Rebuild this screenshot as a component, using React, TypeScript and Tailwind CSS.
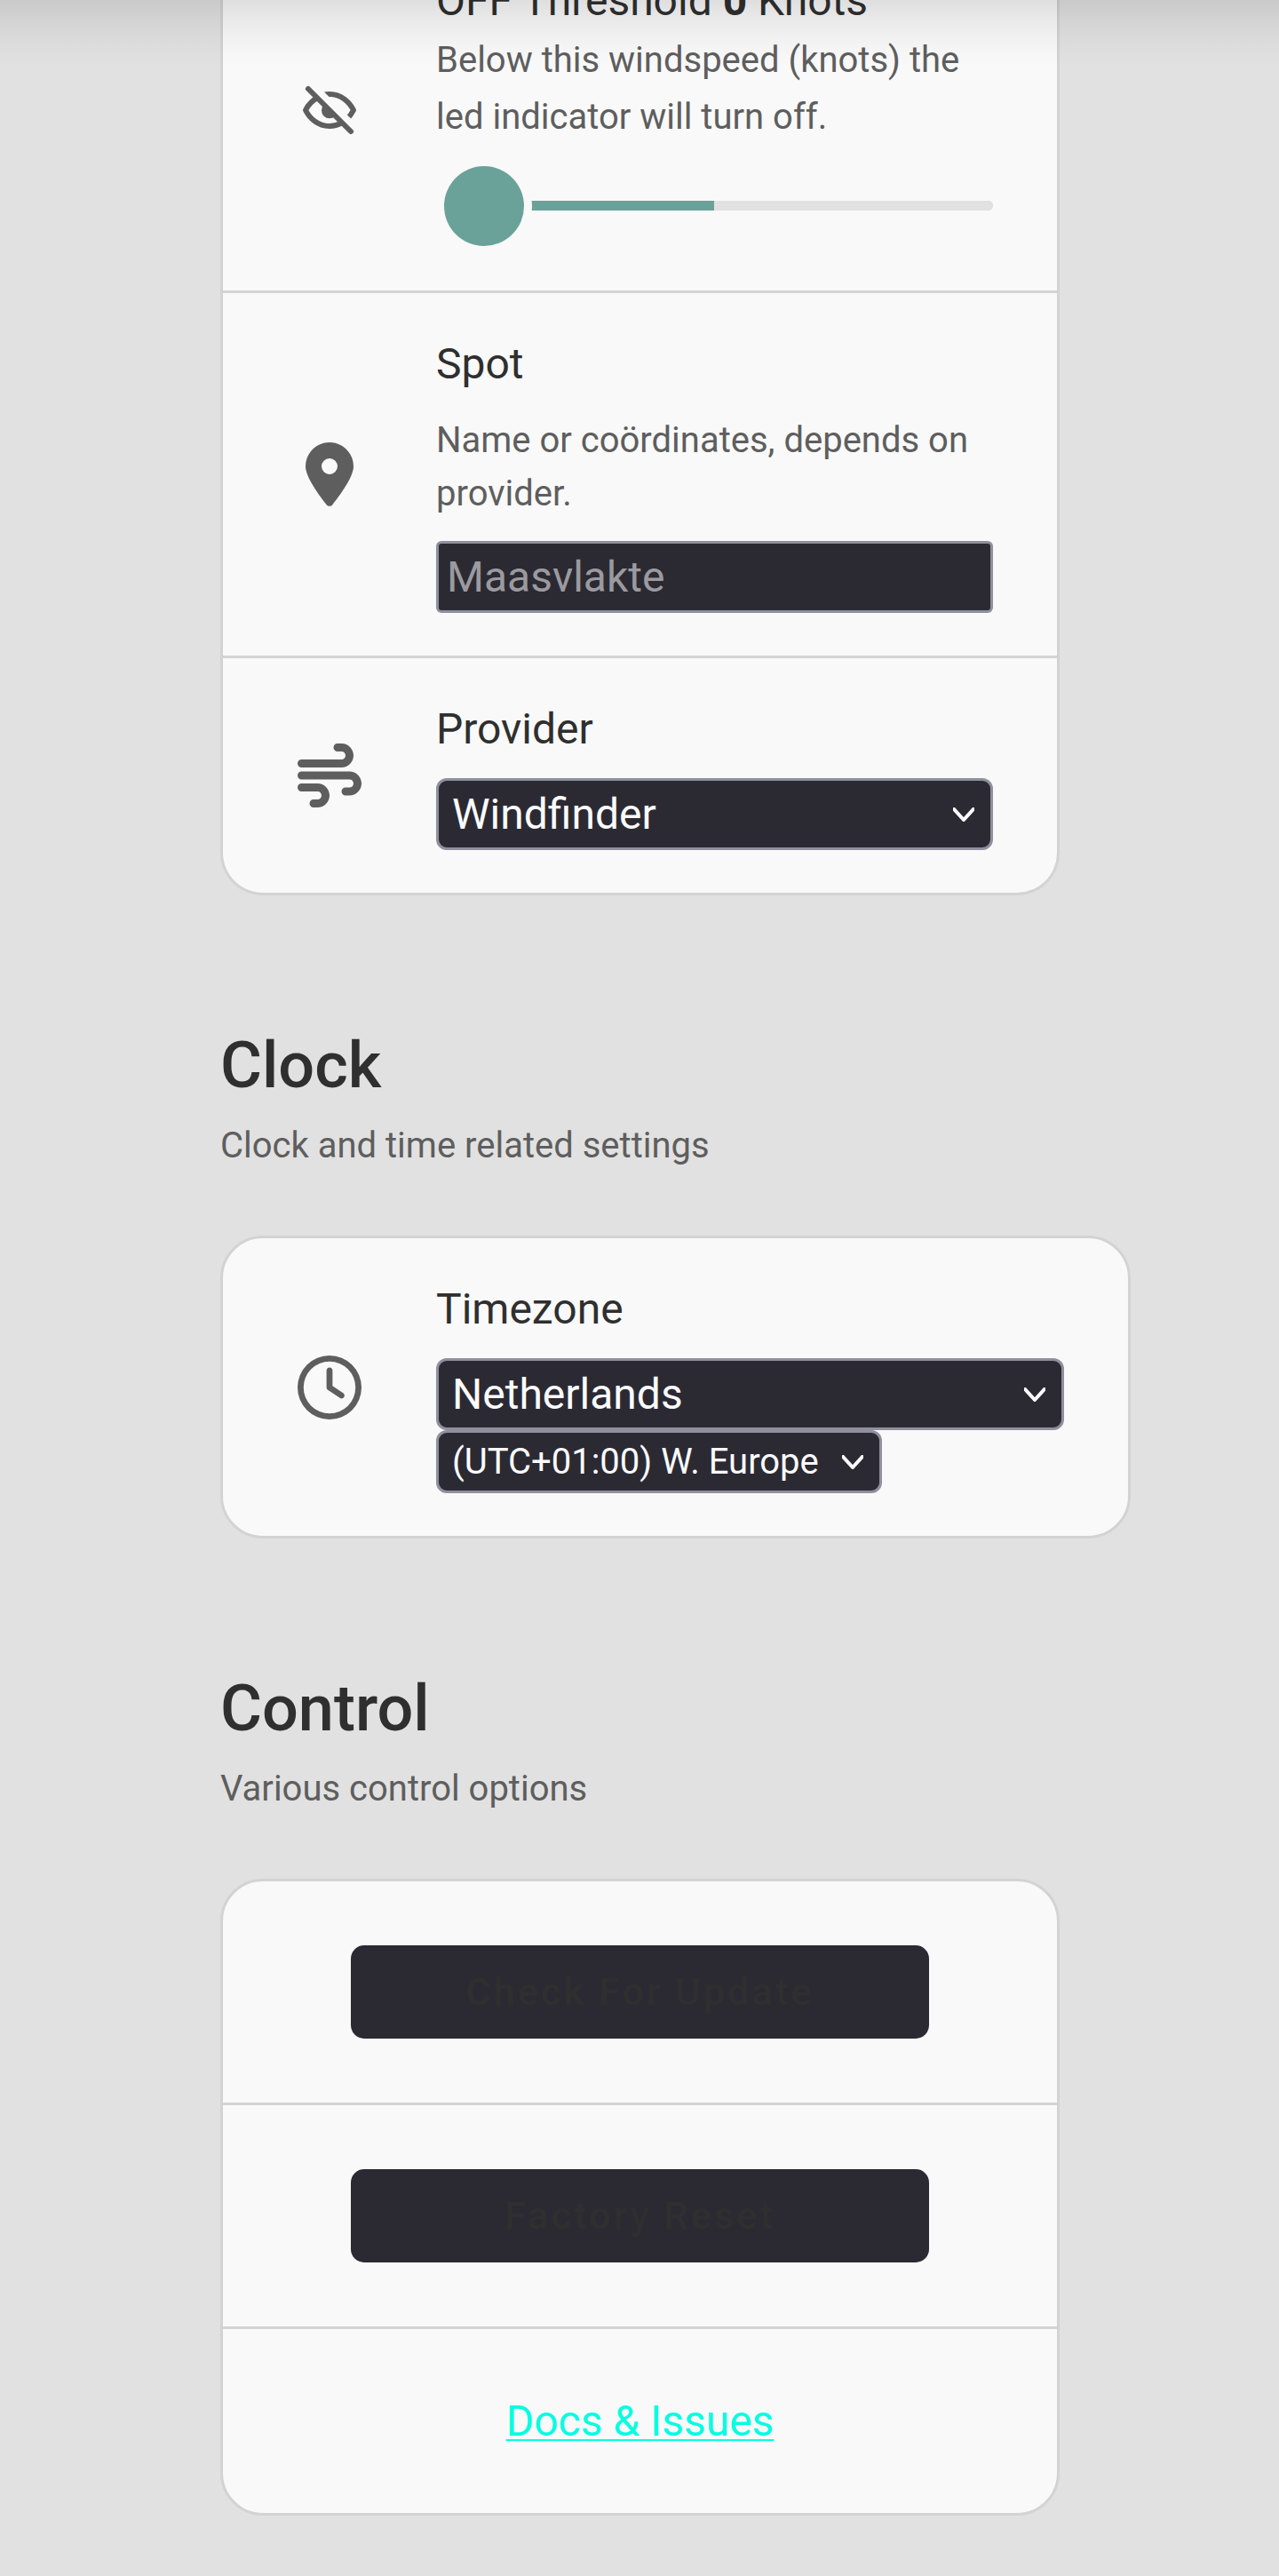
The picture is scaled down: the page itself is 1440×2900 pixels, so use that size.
import type { ReactNode } from 'react';
import { FaLocationDot, FaRegClock, FaWind } from 'react-icons/fa6';

function EyeOffIcon() {
  return (
    <svg viewBox="0 0 24 24" className="size-[72px]" fill="none" stroke="currentColor" strokeWidth="2">
      <defs>
        <clipPath id="eye-upper">
          <path d="M4.8 0H24V19.2Z" />
        </clipPath>
        <clipPath id="eye-lower">
          <path d="M0 0L24 24H0Z" />
        </clipPath>
      </defs>
      <g clipPath="url(#eye-upper)">
        <path d="M10 6.2C10.6 6.07 11.3 6 12 6C16.4 6 19.5 9 21 12C20.4 13.2 19.7 14.2 18.5 15.4" strokeLinejoin="round" />
      </g>
      <g clipPath="url(#eye-lower)">
        <path d="M8 7.1C5.6 8.3 4 10 3 12C4.5 15 7.6 18 12 18C13.8 18 15.3 17.5 16.6 16.8" strokeLinejoin="round" />
        <circle cx="12" cy="12.1" r="3" fill="currentColor" stroke="none" />
      </g>
      <path d="M4 4L20 20" strokeLinecap="round" />
    </svg>
  );
}

function Card({ children, className }: { children: ReactNode; className: string }) {
  return <div className={`shrink-0 border-[3px] border-[#d3d3d3] bg-[#f9f9f9] ${className}`}>{children}</div>;
}

function Setting({ icon, title, children, divider = false }: { icon: ReactNode; title: ReactNode; children: ReactNode; divider?: boolean }) {
  return (
    <div className={`flex pr-[72px] ${divider ? 'border-b-[3px] border-[#d3d3d3]' : ''}`}>
      <div className="flex w-60 shrink-0 items-center justify-center text-[#5e5e5e]">{icon}</div>
      <div className="min-w-0 flex-1 py-12">
        <h3 className="text-5xl leading-[64px] whitespace-nowrap text-[#2f2f2f]">{title}</h3>
        {children}
      </div>
    </div>
  );
}

function Select({ value, small = false }: { value: string; small?: boolean }) {
  return (
    <div
      className={`flex items-center justify-between rounded-xl border-[3px] border-[#8f8f9d] bg-[#2b2a33] pr-[18px] pl-[15px] whitespace-nowrap text-[#fbfbfe] ${
        small ? 'h-[71px] w-[502px] text-[40px] leading-[60px]' : 'mt-[23px] h-[81px] w-full text-5xl leading-[64px]'
      }`}
    >
      <span>{value}</span>
      <svg viewBox="0 0 24 16" className="h-4 w-6 shrink-0" fill="none" stroke="currentColor" strokeWidth="4" strokeLinecap="round" strokeLinejoin="round">
        <path d="M1.2 2L12 14L22.8 2" />
      </svg>
    </div>
  );
}

function SectionHeading({ title, subtitle }: { title: string; subtitle: string }) {
  return (
    <div className="mt-[150px] mb-[71px] shrink-0">
      <h2 className="text-[72px] leading-[84px] font-medium text-[#2f2f2f]">{title}</h2>
      <p className="mt-[18px] text-[40px] leading-[60px] text-[#5e5e5e]">{subtitle}</p>
    </div>
  );
}

function ControlButton({ label }: { label: string }) {
  return (
    <div className="flex justify-center border-b-[3px] border-[#d3d3d3] py-[72px]">
      <button className="h-[105px] w-[651px] rounded-[15px] bg-[#2b2a33] text-[43.2px] leading-[60px] font-medium tracking-[3.1px] text-[#2f2f2f]">
        {label}
      </button>
    </div>
  );
}

export default function App() {
  return (
    <main className="relative flex h-[2900px] w-[1440px] flex-col overflow-hidden bg-[#e1e1e1] pl-[248px] font-['Roboto',sans-serif]">
      <Card className="-mt-[79px] w-[945px] rounded-b-[48px] border-t-0">
        <Setting
          divider
          icon={<EyeOffIcon />}
          title={
            <>
              OFF Threshold <b>0</b> Knots
            </>
          }
        >
          <p className="mt-[3px] text-[40px] leading-[64px] text-[#5e5e5e]">
            Below this windspeed (knots) the
            <br />
            led indicator will turn off.
          </p>
          <div className="relative mt-[62px] mb-[42px] flex h-[11px]">
            <div className="w-[313px] bg-[#6aa299]" />
            <div className="flex-1 rounded-r-[5px] bg-[#e1e1e1]" />
            <div className="absolute top-[-48px] left-0 size-[108px] rounded-full border-[9px] border-[#f9f9f9] bg-[#f9f9f9]">
              <div className="size-[90px] rounded-full bg-[#6aa299]" />
            </div>
            <div className="absolute top-0 left-0 h-[11px] w-[9px] bg-[#f9f9f9]" />
          </div>
        </Setting>
        <Setting divider icon={<FaLocationDot className="h-[72px] w-[54px]" />} title="Spot">
          <p className="mt-6 text-[40px] leading-[60px] text-[#5e5e5e]">
            Name or coördinates, depends on
            <br />
            provider.
          </p>
          <div className="mt-[23px] flex h-[81px] w-full items-center rounded-md border-[3px] border-[#8f8f9d] bg-[#2b2a33] pl-[9px] text-5xl leading-[64px] text-[#9b9a9f]">
            Maasvlakte
          </div>
        </Setting>
        <Setting icon={<FaWind className="size-[72px]" />} title="Provider">
          <Select value="Windfinder" />
        </Setting>
      </Card>

      <SectionHeading title="Clock" subtitle="Clock and time related settings" />
      <Card className="w-[1025px] rounded-[48px]">
        <Setting icon={<FaRegClock className="size-[72px]" />} title="Timezone">
          <Select value="Netherlands" />
          <Select small value="(UTC+01:00) W. Europe" />
        </Setting>
      </Card>

      <SectionHeading title="Control" subtitle="Various control options" />
      <Card className="w-[945px] rounded-[48px]">
        <ControlButton label="Check For Update" />
        <ControlButton label="Factory Reset" />
        <div className="py-[72px] text-center text-5xl leading-[63px]">
          <a href="#" className="text-[#00ffe1] underline decoration-2 underline-offset-4">
            Docs &amp; Issues
          </a>
        </div>
      </Card>

      <div className="pointer-events-none absolute inset-x-0 top-0 h-[76px] bg-[linear-gradient(to_bottom,rgba(0,0,0,0.105)_0px,rgba(0,0,0,0.068)_20px,rgba(0,0,0,0.034)_40px,rgba(0,0,0,0.01)_60px,rgba(0,0,0,0)_76px)]" />
    </main>
  );
}
